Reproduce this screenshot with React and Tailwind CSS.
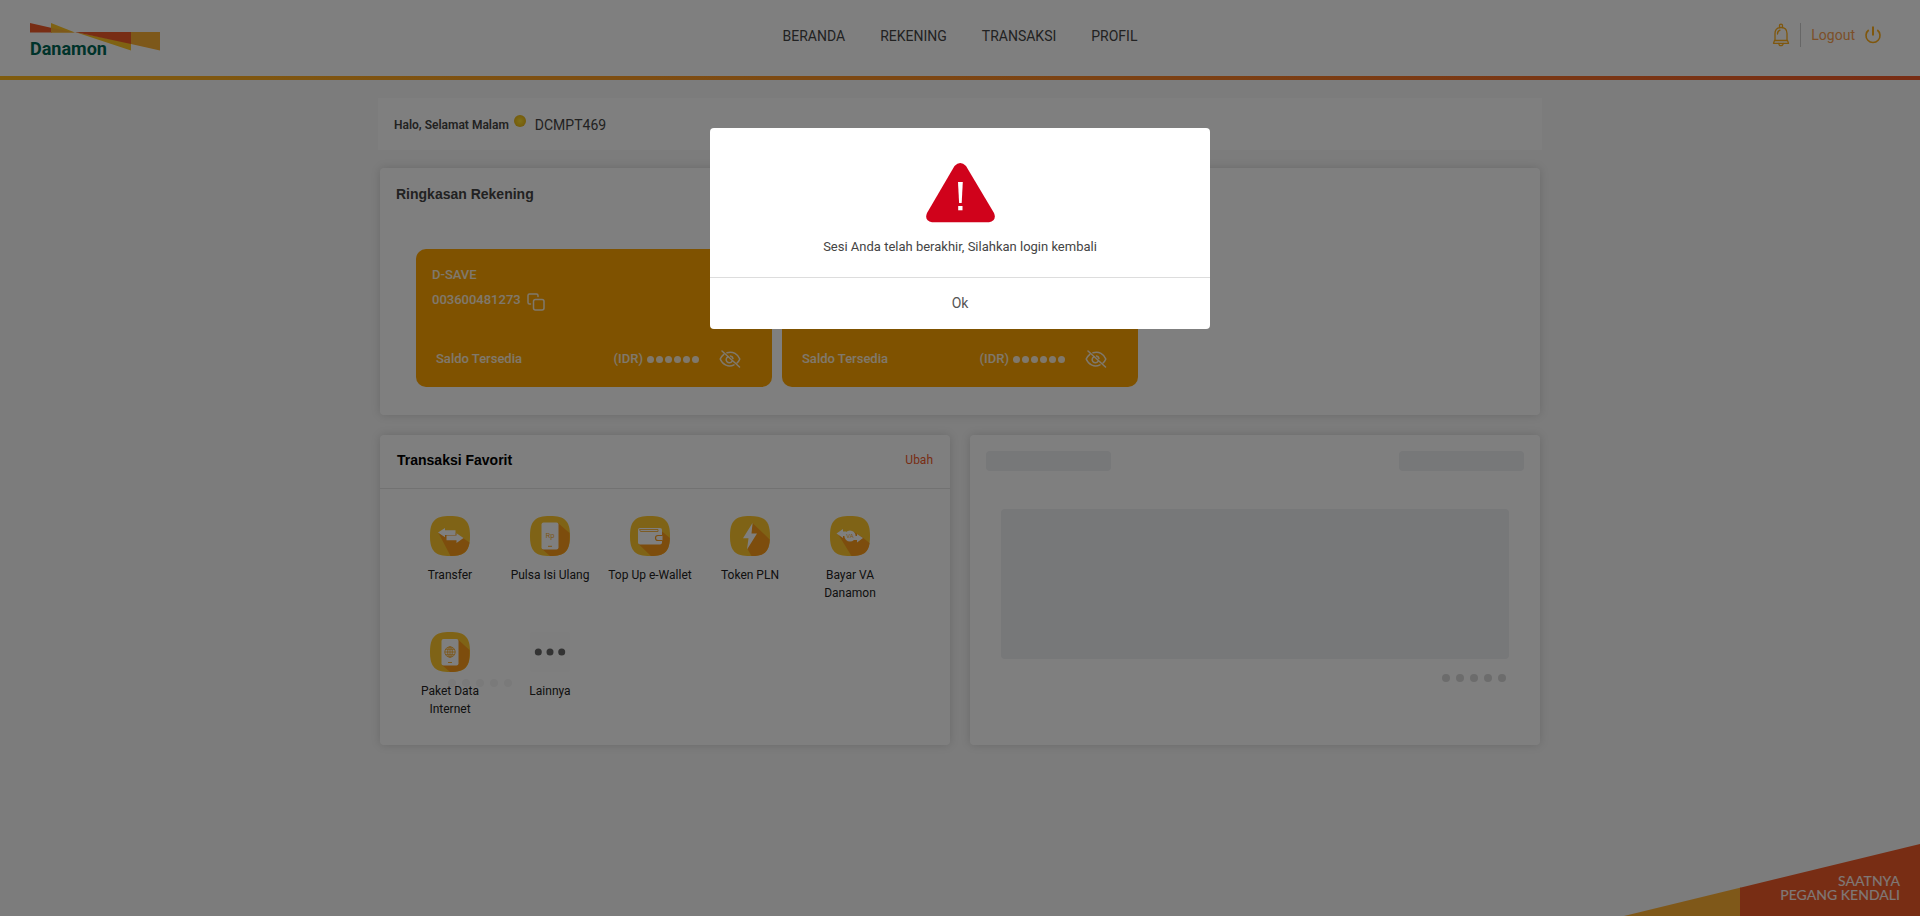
import React from "react";

function Logo() {
  return (
    <svg viewBox="0 0 130 38" className="h-[38px] w-[130px]" role="img" aria-label="Danamon">
      <path d="M0 0 L22 5 V9.500 H0 Z" fill="#f15a29" />
      <path d="M21 0 L45 9.500 H21 Z" fill="#ffc425" />
      <path d="M21 4.700 L45 9.500 H21 Z" fill="#fbb034" />
      <path d="M45 9 L101 27.500 V20 Z" fill="#ffc425" />
      <path d="M45 9 H101 V21 Z" fill="#f15a29" />
      <path d="M101 9 H130 V27.500 L101 21 Z" fill="#fbb034" />
      <text x="0" y="32" fontFamily="Roboto, sans-serif" fontWeight="700" fontSize="18" fill="#006654">
        Danamon
      </text>
    </svg>
  );
}

function BellIcon() {
  return (
    <svg viewBox="0 0 18 24" className="h-6 w-[18px]" fill="none" stroke="#ffae1a" strokeWidth="1.300" strokeLinejoin="round" strokeLinecap="round">
      <path d="M7.500 4.500 V2.600 a1.500 1.500 0 0 1 3 0 V4.500" />
      <path d="M3 17.500 V10.500 C3 6.500 5.500 4.500 9 4.500 S15 6.500 15 10.500 V17.500" />
      <path d="M5.500 11 C5.500 9 6.300 7.800 8 7.200" />
      <path d="M2.500 17.500 H15.500 L16.500 20.300 H1.500 Z" />
      <path d="M6.800 20.500 a2.200 2.200 0 0 0 4.400 0" />
    </svg>
  );
}

function PowerIcon() {
  return (
    <svg viewBox="0 0 18 18" className="h-[18px] w-[18px]" fill="none" stroke="#ffae1a" strokeWidth="1.600">
      <path d="M9 0.500 V9.500" strokeWidth="2" />
      <path d="M4.700 4 A7 7 0 1 0 13.300 4" />
    </svg>
  );
}

function CopyIcon() {
  return (
    <svg viewBox="0 0 18 18" className="h-[18px] w-[18px]" fill="none" stroke="#ffffff" strokeOpacity="0.850" strokeWidth="1.500" strokeLinecap="round" strokeLinejoin="round">
      <rect x="6.500" y="6.500" width="10.500" height="10.500" rx="2" />
      <path d="M3.500 11 H2.500 A1.500 1.500 0 0 1 1 9.500 V2.500 A1.500 1.500 0 0 1 2.500 1 H9.500 A1.500 1.500 0 0 1 11 2.500 V3.500" />
    </svg>
  );
}

function EyeOffIcon() {
  return (
    <svg viewBox="0 0 22 18" className="h-[18px] w-[22px]" fill="none" stroke="#ffffff" strokeOpacity="0.850" strokeWidth="1.500" strokeLinecap="round">
      <path d="M3 1 L20.500 17" />
      <path d="M8 2.800 C14 0.800 19 4.500 20.800 9 C20.200 10.600 19.200 12 18 13" />
      <path d="M4.800 4.300 C3.200 5.500 2 7.200 1.200 9 C3.500 14.800 9.500 17.600 15 14.800" />
      <path d="M8.800 6.800 A3.200 3.200 0 1 0 13 11.400" />
      <path d="M11.500 6 A3.200 3.200 0 0 1 14 8.500" />
    </svg>
  );
}

function Tile({ shadow, children }) {
  return (
    <svg viewBox="0 0 40 40" className="h-10 w-10" aria-hidden="true">
      <path d="M20 0 C35 0 40 5 40 20 S35 40 20 40 S0 35 0 20 S5 0 20 0 Z" fill="#ffc72c" />
      <path d={shadow} fill="#fa9a1b" />
      {children}
    </svg>
  );
}

function TransferIcon() {
  return (
    <Tile shadow="M8.500 17 L20.500 40 C33 40 38 36 39.500 26.500 L33 22 L25 17 Z">
      <path d="M8 16.500 L15 12 V14.300 H25.500 V19 H15 V21.300 Z" fill="#fff" />
      <path d="M33.500 22 L26.500 17.200 V19.500 H16.500 V24.300 H26.500 V27 Z" fill="#fff" />
    </Tile>
  );
}

function PulsaIcon() {
  return (
    <Tile shadow="M28 7 L39.500 17 C40.500 34 36 40 20 40 L12 33 Z">
      <rect x="11.500" y="6.500" width="17" height="27" rx="2" fill="#fff" />
      <text x="20" y="21.500" textAnchor="middle" fontFamily="Roboto, sans-serif" fontSize="7.500" fill="#fbb034">Rp</text>
      <path d="M18 30.300 H22" stroke="#fbb034" />
    </Tile>
  );
}

function WalletIcon() {
  return (
    <Tile shadow="M28 12 L39.800 22 C39.500 36 34 40 21 40 L8.500 28 Z">
      <rect x="8" y="12" width="24" height="16.500" rx="2" fill="#fff" />
      <path d="M9.500 13.500 H28 V15.500 H10.500 Z" fill="#fff" stroke="#fbb034" strokeWidth="0.900" />
      <path d="M32.500 19.500 H28 a2.500 2.500 0 0 0 0 5 H32.500" fill="#fff" stroke="#fa9a1b" strokeWidth="1.200" />
    </Tile>
  );
}

function TokenIcon() {
  return (
    <Tile shadow="M23 7.500 L39.700 23.500 C39 36.500 34 40 21.500 40 L17.500 33 Z">
      <path d="M22.500 7 L13 22.300 H18.500 L17 33.500 L27 17.500 H21.500 Z" fill="#fff" />
    </Tile>
  );
}

function VaIcon() {
  return (
    <Tile shadow="M8 18 L21.500 40 C34 40 38.500 36 39.600 27 L32 21 L24 16 Z">
      <path d="M6.500 17.500 L13 13 V15.500 H16 V20 H13 V22 Z" fill="#fff" />
      <path d="M33 22 L27 18 V20 H22 V24 H27 V26.500 Z" fill="#fff" />
      <circle cx="20" cy="20" r="5.600" fill="#fff" />
      <text x="20" y="22.200" textAnchor="middle" fontFamily="Roboto, sans-serif" fontSize="6" fill="#fbb034">VA</text>
    </Tile>
  );
}

function DataIcon() {
  return (
    <Tile shadow="M28 7.500 L39.500 18 C40 34 36 40 20 40 L12 33 Z">
      <rect x="11.500" y="7" width="17" height="26.500" rx="2" fill="#fff" />
      <g fill="none" stroke="#fbb034" strokeWidth="0.900">
        <circle cx="20" cy="20" r="5.200" />
        <ellipse cx="20" cy="20" rx="2.300" ry="5.200" />
        <path d="M20 14.800 V25.200 M14.800 20 H25.200 M15.600 17.300 H24.400 M15.600 22.700 H24.400" />
      </g>
      <path d="M18 30.500 H22" stroke="#fbb034" />
    </Tile>
  );
}

function MoreIcon() {
  return (
    <svg viewBox="0 0 40 40" className="h-10 w-10" aria-hidden="true">
      <rect x="0.500" y="0.500" width="39" height="39" fill="#fcfcfc" />
      <circle cx="8.300" cy="20" r="3.500" fill="#666" />
      <circle cx="20" cy="20" r="3.500" fill="#666" />
      <circle cx="31.700" cy="20" r="3.500" fill="#666" />
    </svg>
  );
}

function AccountCard({ name, number }) {
  return (
    <article className="flex h-[138px] w-[356px] flex-col justify-between rounded-[10px] bg-[#ffa400] px-4 pt-[17px] pb-[19px] text-[13px] font-medium text-white/85">
      <div>
        <h3 className="leading-[18px]">{name}</h3>
        <div className="mt-[5px] flex items-center gap-[6px]">
          <span className="leading-5">{number}</span>
          <button type="button" aria-label="Salin nomor rekening" className="mt-1"><CopyIcon /></button>
        </div>
      </div>
      <div className="flex items-center pr-[15px] pl-1 leading-[18px]">
        <span className="grow">Saldo Tersedia</span>
        <span>(IDR)</span>
        <span className="ml-1 flex gap-[2px]">
          {[0, 1, 2, 3, 4, 5].map((i) => (
            <span key={i} className="h-[7px] w-[7px] rounded-full bg-white/85" />
          ))}
        </span>
        <button type="button" aria-label="Tampilkan saldo" className="ml-5"><EyeOffIcon /></button>
      </div>
    </article>
  );
}

const accounts = [
  { name: "D-SAVE", number: "003600481273" },
  { name: "", number: "" },
];

const favorites = [
  { label: "Transfer", Icon: TransferIcon },
  { label: "Pulsa Isi Ulang", Icon: PulsaIcon },
  { label: "Top Up e-Wallet", Icon: WalletIcon },
  { label: "Token PLN", Icon: TokenIcon },
  { label: "Bayar VA Danamon", Icon: VaIcon, narrow: true },
  { label: "Paket Data Internet", Icon: DataIcon, narrow: true },
  { label: "Lainnya", Icon: MoreIcon },
];

function Dots({ className, dot }) {
  return (
    <div className={className}>
      {[0, 1, 2, 3, 4].map((i) => (
        <span key={i} className={dot} />
      ))}
    </div>
  );
}

export default function App() {
  return (
    <div className="relative flex min-h-screen flex-col bg-[#f8f8f8] font-[Roboto,sans-serif] text-[#444]">
      <header className="bg-white">
        <div className="grid h-[76px] grid-cols-[1fr_auto_1fr] items-start px-[30px]">
          <a href="#beranda" className="pt-[23px]"><Logo /></a>
          <nav className="flex gap-[35px] pt-[26px] text-sm leading-5">
            <a href="#beranda">BERANDA</a>
            <a href="#rekening">REKENING</a>
            <a href="#transaksi">TRANSAKSI</a>
            <a href="#profil">PROFIL</a>
          </nav>
          <div className="flex items-center justify-end pt-[23px] pr-2">
            <button type="button" aria-label="Notifikasi"><BellIcon /></button>
            <span className="mx-[10px] h-6 w-px bg-[#ccc]" />
            <button type="button" className="flex items-center gap-[9px] text-sm text-[#f9a050]">
              Logout
              <PowerIcon />
            </button>
          </div>
        </div>
        <div className="h-1 bg-linear-to-r from-[#ffb81c] to-[#f15a29]" />
      </header>

      <main className="mx-auto w-full max-w-[1164px] pt-[18px] pb-10">
        <section className="flex h-[52px] items-center bg-white px-4 pt-[2px]">
          <strong className="text-xs font-semibold">Halo, Selamat Malam</strong>
          <span className="mr-[9px] mb-2 ml-[5px] h-3 w-3 rounded-full bg-radial from-[#ffe030] to-[#e0a80c]" />
          <span className="text-sm">DCMPT469</span>
        </section>

        <div className="mx-[2px] mt-[18px] grid grid-cols-2 gap-5">
          <section className="col-span-2 rounded-[4px] bg-white px-4 pt-4 pb-7 shadow-[0_0_10px_rgba(0,0,0,0.15)]">
            <h2 className="font-['Liberation_Sans',sans-serif] text-sm leading-5 font-bold">Ringkasan Rekening</h2>
            <div className="mt-[45px] flex gap-[10px] px-5">
              {accounts.map((a, i) => (
                <AccountCard key={i} {...a} />
              ))}
            </div>
          </section>

          <section className="relative rounded-[4px] bg-white shadow-[0_0_10px_rgba(0,0,0,0.15)]">
            <div className="flex h-[54px] items-center justify-between border-b border-[#e5e5e5] px-[17px] pb-[3px]">
              <h2 className="font-['Liberation_Sans',sans-serif] text-sm font-bold text-black">Transaksi Favorit</h2>
              <button type="button" className="text-xs text-[#f15a29]">Ubah</button>
            </div>
            <Dots
              className="absolute top-[244px] left-[68px] flex gap-[6px]"
              dot="h-2 w-2 rounded-full bg-[#f5f5f5]"
            />
            <ul className="grid grid-cols-[repeat(5,100px)] gap-y-[30px] px-5 pt-[27px] pb-[27px]">
              {favorites.map(({ label, Icon, narrow }) => (
                <li key={label}>
                  <button type="button" className="relative flex min-h-[86px] w-full flex-col items-center text-xs leading-[18px] text-[#222]">
                    <Icon />
                    <span className={narrow ? "mt-[10px] w-[70px]" : "mt-[10px]"}>{label}</span>
                  </button>
                </li>
              ))}
            </ul>
          </section>

          <section aria-busy="true" className="rounded-[4px] bg-white px-4 pt-4 shadow-[0_0_10px_rgba(0,0,0,0.15)]">
            <div className="flex justify-between">
              <span className="h-5 w-[125px] rounded-[4px] bg-[#eef0f3]" />
              <span className="h-5 w-[125px] rounded-[4px] bg-[#eef0f3]" />
            </div>
            <div className="mx-[15px] mt-[38px] h-[150px] rounded-[4px] bg-[#eef0f3]" />
            <Dots className="mt-[15px] mr-[18px] flex justify-end gap-[6px]" dot="h-2 w-2 rounded-full bg-[#d8d8d8]" />
          </section>
        </div>
      </main>

      <aside className="absolute right-0 bottom-0 grid h-[72px] w-[296px]">
        <svg viewBox="0 0 296 72" className="col-start-1 row-start-1 h-[72px] w-[296px]" aria-hidden="true">
          <path d="M0 72 L117 43.500 V72 Z" fill="#ffb033" />
          <path d="M116 43.700 L296 0 V72 H116 Z" fill="#f15a29" />
        </svg>
        <p className="col-start-1 row-start-1 flex flex-col self-end pr-5 pb-[14px] text-right font-[Lato,sans-serif] text-sm leading-[14px] font-medium text-white/90">
          <span>SAATNYA</span>
          <span>PEGANG KENDALI</span>
        </p>
      </aside>

      <div className="fixed inset-0 flex items-start justify-center bg-black/50 pt-32">
        <div role="alertdialog" aria-modal="true" aria-describedby="session-message" className="w-[500px] rounded-[4px] bg-white">
          <div className="flex flex-col items-center border-b border-[#ddd] pt-[35px] pb-5">
            <svg viewBox="0 0 70 60" className="h-[60px] w-[70px]" aria-hidden="true">
              <path d="M29.500 3 Q35.300 -3 41 3 L69 50 Q72 57.500 64 59.200 H7 Q-1 57.500 2 50 Z" fill="#d0021b" />
              <path d="M33 19 H37.800 L36.700 40 H34.100 Z" fill="#fff" />
              <rect x="33.200" y="43" width="4.300" height="4.300" fill="#fff" />
            </svg>
            <p id="session-message" className="mt-[14px] text-[13px] leading-5">Sesi Anda telah berakhir, Silahkan login kembali</p>
          </div>
          <button type="button" className="block h-[51px] w-full pb-[2px] text-sm text-[#555]">Ok</button>
        </div>
      </div>
    </div>
  );
}
